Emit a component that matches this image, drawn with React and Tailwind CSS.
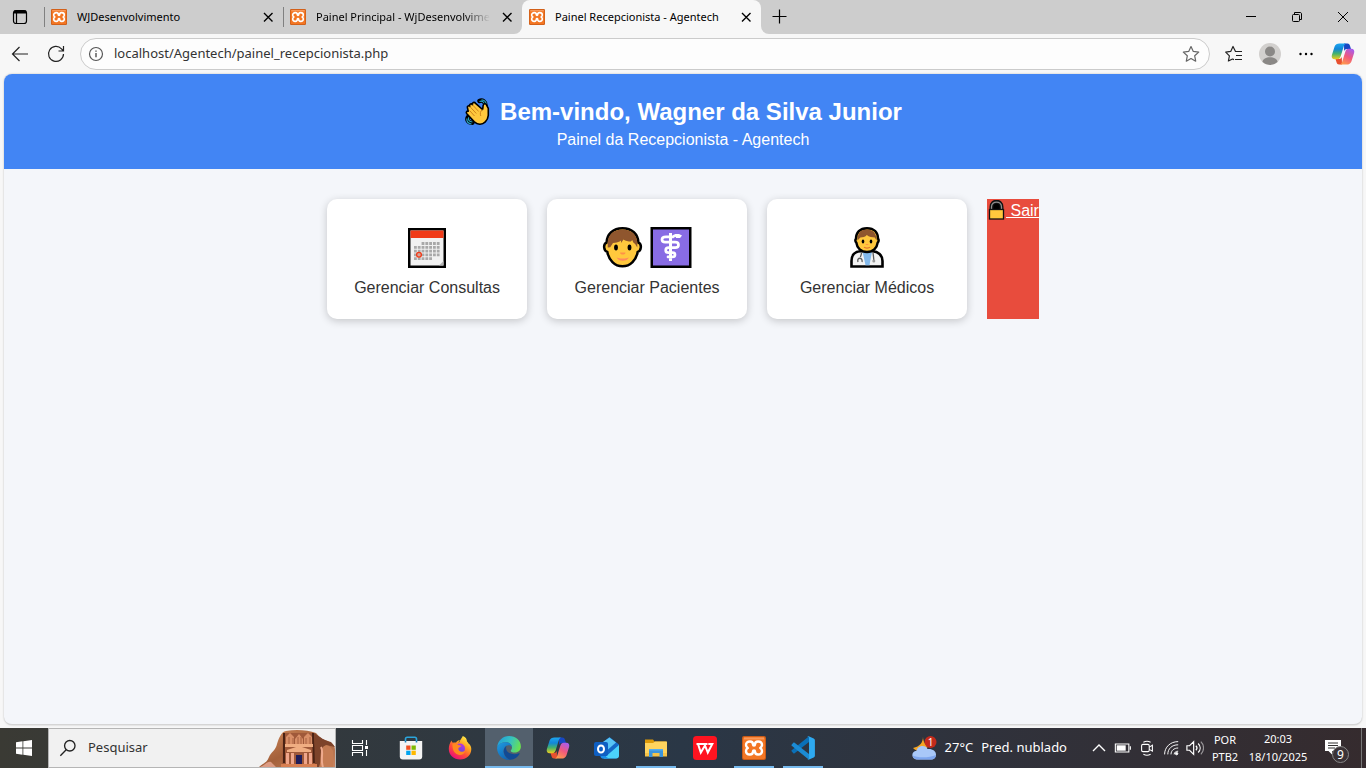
import React, { useState } from "react";

const tabs = [
    { id: 1, title: "WJDesenvolvimento" },
    { id: 2, title: "Painel Principal - WjDesenvolvime", faded: true },
    { id: 3, title: "Painel Recepcionista - Agentech" }
];

const cards = [
    { label: "Gerenciar Consultas", icons: [CalendarEmoji] },
    { label: "Gerenciar Pacientes", icons: [PersonEmoji, MedicalEmoji] },
    { label: "Gerenciar Médicos", icons: [DoctorEmoji] }
];

const apps = [
    { name: "Microsoft Store", icon: StoreIcon },
    { name: "Firefox", icon: FirefoxIcon },
    { name: "Edge", icon: EdgeIcon, active: true },
    { name: "Copilot", icon: CopilotIcon },
    { name: "Outlook", icon: OutlookIcon },
    { name: "Explorador de Arquivos", icon: FolderIcon, running: true },
    { name: "WPS Office", icon: WpsIcon },
    { name: "XAMPP", icon: XamppIcon, running: true },
    { name: "Visual Studio Code", icon: VsCodeIcon, running: true }
];

/* ---------- app logos ---------- */

function XamppIcon({ className = "size-6" }) {
    return (
        <svg viewBox="0 0 24 24" className={className}>
            <rect width="24" height="24" rx="2" fill="#c85a17" />
            <rect x="1" y="1" width="22" height="22" rx="1.5" fill="#f37623" />
            <path d="M2 1.500h20v2H2z" fill="#f9a873" opacity=".7" />
            <path
                d="M8 5.500c2 0 3 1.200 3 3 0 .7.300 1 1 1s1-.3 1-1c0-1.800 1-3 3-3 2.400 0 4 1.400 4 3.500 0 1.300-.6 2.300-1.800 3 1.200.7 1.800 1.700 1.800 3 0 2.100-1.600 3.500-4 3.500-2 0-3-1.200-3-3 0-.7-.3-1-1-1s-1 .3-1 1c0 1.800-1 3-3 3-2.400 0-4-1.400-4-3.500 0-1.300.6-2.300 1.800-3C4.600 11.300 4 10.300 4 9c0-2.100 1.600-3.500 4-3.500z"
                fill="none"
                stroke="#fff"
                strokeWidth="2.400"
                strokeLinejoin="round"
            />
        </svg>
    );
}

function CopilotIcon({ className = "size-6" }) {
    return (
        <svg viewBox="0 0 24 24" className={className}>
            <defs>
                <linearGradient id="cpA" x1="0" y1="0" x2="0" y2="1">
                    <stop offset="0" stopColor="#1ea7f0" />
                    <stop offset=".35" stopColor="#1286d8" />
                    <stop offset=".65" stopColor="#45b36b" />
                    <stop offset="1" stopColor="#f0cc1c" />
                </linearGradient>
                <linearGradient id="cpB" x1=".8" y1="0" x2=".3" y2="1">
                    <stop offset="0" stopColor="#a65df0" />
                    <stop offset=".5" stopColor="#f0587e" />
                    <stop offset="1" stopColor="#ff9a4c" />
                </linearGradient>
            </defs>
            <path d="M13 1.500h3.500c1.300 0 2 .8 2.400 2L20 7h-4c-1.500 0-2.400.8-2.900 2.200z" fill="#1747c4" />
            <path d="M11 22.500H8c-1.400 0-2-.8-2.400-2L4.500 17H8c1.600 0 2.300-.8 2.800-2.200z" fill="#e8502f" />
            <path d="M8.500 1.500h7c-1.500.2-2.200 1.300-2.700 2.800L9.600 14.600C9 16.300 8 17.200 6.400 17.200H3.600C1.300 17.200.2 15.400.9 13L3.600 4.600C4.300 2.600 6 1.500 8.500 1.500z" fill="url(#cpA)" />
            <path d="M15.500 22.500h-7c1.500-.2 2.200-1.300 2.700-2.800l3.200-10.300C15 7.700 16 6.800 17.600 6.800h2.800c2.300 0 3.400 1.800 2.700 4.200l-2.700 8.400c-.7 2-2.400 3.100-4.900 3.100z" fill="url(#cpB)" />
        </svg>
    );
}

function StoreIcon() {
    return (
        <svg viewBox="0 0 24 24" className="size-6">
            <path d="M6.500 7V3c0-1 .6-1.700 1.700-1.700h7.600c1.100 0 1.700.7 1.700 1.700v4" fill="none" stroke="#2ba5dc" strokeWidth="1.600" />
            <path d="M.8 5h22.400v15.500c0 2-1 3-3 3H3.800c-2 0-3-1-3-3z" fill="#f4f4f4" />
            <path d="M6.500 5V6.500M17.500 5V6.500" stroke="#1a7fb8" strokeWidth="1.600" />
            <path d="M7.200 9.500h4.300v4.300H7.200z" fill="#f25022" />
            <path d="M12.500 9.500h4.300v4.300h-4.300z" fill="#7fba00" />
            <path d="M7.200 14.700h4.300V19H7.200z" fill="#00a4ef" />
            <path d="M12.500 14.700h4.300V19h-4.300z" fill="#ffb900" />
        </svg>
    );
}

function FirefoxIcon() {
    return (
        <svg viewBox="0 0 24 24" className="size-6">
            <defs>
                <linearGradient id="ffBody" x1=".85" y1=".05" x2=".25" y2=".95">
                    <stop offset="0" stopColor="#fff44f" />
                    <stop offset=".35" stopColor="#ffa61f" />
                    <stop offset=".65" stopColor="#ff4f38" />
                    <stop offset="1" stopColor="#ec1075" />
                </linearGradient>
                <linearGradient id="ffCore" x1=".7" y1="0" x2=".3" y2="1">
                    <stop offset="0" stopColor="#b833e1" />
                    <stop offset="1" stopColor="#5b4fd8" />
                </linearGradient>
            </defs>
            <path d="M3.500 4.500c.3 1 .6 1.600 1.400 2.300 1-.4 2-.4 3.100-.2C9 5 10.500 4.200 12 4c-1 1-1.400 1.800-1.200 3 2-4 3-5 4-7 3 1 4.200 3.400 4.200 5.600.6.4 1 1 1.300 1.700C22.500 9 23.300 11 23.300 13c0 6-4.800 10.500-11.200 10.500S.8 19 .8 13c0-3.200 1-6 2.700-8.500z" fill="url(#ffBody)" />
            <circle cx="12" cy="12.500" r="5" fill="url(#ffCore)" />
            <path d="M4.500 8c2-1 4-.8 6 1l3 .7c-.3 1.200-2.500 1.200-3 2.300-.4 1.400.2 2.800 1.800 3.500 2 .7 3.600.2 5-.8-.8 3-3.300 4.500-6 4.200C7.500 18.500 4 15 4.500 8z" fill="#ff8a1f" />
        </svg>
    );
}

function EdgeIcon() {
    return (
        <svg viewBox="0 0 24 24" className="size-6">
            <defs>
                <linearGradient id="edTop" x1="0" y1=".3" x2="1" y2=".6">
                    <stop offset="0" stopColor="#219fd8" />
                    <stop offset=".5" stopColor="#35c1c1" />
                    <stop offset="1" stopColor="#6be24d" />
                </linearGradient>
                <linearGradient id="edLeft" x1="0" y1="0" x2=".7" y2="1">
                    <stop offset="0" stopColor="#1f9de2" />
                    <stop offset="1" stopColor="#1060b0" />
                </linearGradient>
            </defs>
            <path d="M.2 11C.8 4.800 5.800.1 12 .1c6.900 0 11.900 4.700 11.900 10.400 0 3.700-2.700 6-6 6-2.700 0-4.200-.9-4.200-1.800 0-.7 1.300-1.200 1.300-3.300C15 8.500 12.300 6.300 8.700 6.300 5 6.300 1.900 8 .2 11z" fill="url(#edTop)" />
            <path d="M.1 12C.6 8.600 4 6.200 8.700 6.200c3.600 0 6.300 2.200 6.300 5-1-1.600-2.200-2-3.600-1.900-3 .2-5 3-4.800 6.400.2 3.600 2.800 7 6.900 8.100C6 24.600 0 19 .1 12z" fill="url(#edLeft)" />
            <path d="M9.600 10c-2.400 1.500-3.300 4-2.700 6.800.8 3.800 3.600 6.300 6.600 7 4-.4 7.200-2.700 9-5.900.4-.6 0-.9-.6-.6-1.500.7-2.900 1-4.400 1-4.500 0-8-2.500-8.400-5.600-.1-1 0-1.900.5-2.700z" fill="#124a94" />
        </svg>
    );
}

function OutlookIcon() {
    return (
        <svg viewBox="0 0 26 24" className="h-6 w-[26px]">
            <path d="M6 8.500 15.500 1 25 8.500V19c0 2.300-1 3.500-3.500 3.500h-12C7 22.500 6 21 6 19z" fill="#1469c7" />
            <path d="m9 6 6.500-4.500L22 6.500 14 13.500l-6-5z" fill="#58c4f5" />
            <path d="M25 9v10.500c0 2-1.200 3-3 3H9.500z" fill="#4bd2fb" />
            <path d="M7 10v8l8 4.500H9c-1.500 0-2-1-2-2z" fill="#1b8fe8" />
            <rect y="6" width="14" height="14" rx="2" fill="#0f5fc2" />
            <ellipse cx="7" cy="13" rx="3" ry="3.500" fill="none" stroke="#fff" strokeWidth="2" />
        </svg>
    );
}

function FolderIcon() {
    return (
        <svg viewBox="0 0 24 24" className="size-6">
            <path d="M1 3.500h8l1.500 2H22v4H1z" fill="#dd9a09" />
            <path d="M1 7h8l2-1.500h12V20H1z" fill="#ffd45e" />
            <path d="M1 17h22v3.500H1z" fill="#f7c448" />
            <path d="M5 13h14v8h-3.500v-4h-7v4H5z" fill="#3b95dd" />
            <path d="M5 13h14v1.500H5z" fill="#57adec" />
        </svg>
    );
}

function WpsIcon() {
    return (
        <svg viewBox="0 0 24 24" className="size-6">
            <rect width="24" height="24" rx="3.500" fill="#ff1420" />
            <path d="M3.500 8h11M5 8l2.800 8.500L12 9.500l2.800 7L19.300 8h-4" fill="none" stroke="#fff" strokeWidth="2" />
        </svg>
    );
}

function VsCodeIcon() {
    return (
        <svg viewBox="0 0 24 24" className="size-6">
            <path d="m.6 15.300 1.700 1.900c.4.300.9.300 1.300 0L18 6V.2L.7 14.200c-.4.300-.4.800-.1 1.100z" fill="#0a70b8" />
            <path d="M.6 8.700l1.700-1.900c.4-.3.900-.3 1.300 0L18 18v5.800L.7 9.800c-.4-.3-.4-.8-.1-1.100z" fill="#1b8bd4" />
            <path d="M17.500 23.800c-.6 0-1-.1-1.500-.5.700.6 2 .2 2-.9V1.600c0-1.100-1.300-1.500-2-.9.500-.5 1-.7 1.700-.5l5 2.300c.8.400 1.200 1 1.200 1.700v15.600c0 .7-.4 1.300-1.200 1.700z" fill="#2ea9f0" />
        </svg>
    );
}

/* ---------- emoji ---------- */

function WaveEmoji() {
    return (
        <svg viewBox="0 0 28 28" className="size-7">
            <path d="M15.500 3c3-1.500 6 1 6 4.500M4.500 18.500c-2.500 3-.5 6 4 6.200" fill="none" stroke="#000" strokeWidth="4.500" strokeLinecap="round" />
            <path d="M15.500 3.500c3-1.300 5 1 5.200 4M17.500 1.800c2.500.2 4.500 2 4.800 4.700M5 19c-1.500 2.500 0 4.700 3.500 5M2.800 20.500c-.2 2.800 1.500 5 4.700 5.500" fill="none" stroke="#26a5c4" strokeWidth="1.100" />
            <path
                d="M3.500 10c-.8-1.600 1-2.900 2.300-1.700-.9-2 1.200-3.300 2.600-1.700-.5-2 1.800-3 3.200-1.300l6.900 6.200c.6-1.500.3-3 .8-4.500.6-2 3-1.300 3.400.4l1.600 3v7c-.3 3-1.500 5.100-3 6.500-3.500 3.400-8 2.500-11 0l-7.500-8.200c-1.300-1.600.2-3 1.400-2.500L3.500 10z"
                fill="#ffc83d"
                stroke="#000"
                strokeWidth="1.600"
                strokeLinejoin="round"
            />
            <path d="m5.800 8.500 6.500 7M8.400 6.700l6.300 6.800M5.500 12.500l5 5.500M18.300 11.500c-2 2-2.500 4-1.500 6.500" fill="none" stroke="#c97c16" strokeWidth=".9" />
        </svg>
    );
}

function CalendarEmoji() {
    return (
        <svg viewBox="0 0 42 44" className="h-11 w-[42px]">
            <path d="M2 3h38v40H2z" fill="#000" />
            <path d="M4.500 5.500h33v35h-33z" fill="#f1f1f1" />
            <path d="M4.500 5.500h33V13h-33z" fill="#f03a17" />
            <g fill="none" stroke="#a9a9a9" strokeWidth="2.800" strokeDasharray="2.800 1">
                <path d="M15.600 18.500h18.100" />
                <path d="M8 22.300h25.700" />
                <path d="M8 26.100h25.700" />
                <path d="M8 29.900h25.700" />
                <path d="M8 33.700h18.100" />
            </g>
            <circle cx="13" cy="29.800" r="2.400" fill="#d6a398" stroke="#f03a17" strokeWidth="1.300" />
            <path d="M37.500 36v4.500H33z" fill="#b5b5b5" />
        </svg>
    );
}

function PersonEmoji() {
    return (
        <svg viewBox="0 0 42 44" className="h-11 w-[42px]">
            <path
                d="M20.500 3.200c9.500 0 15.500 6 16 14.500 2.100 1 2.600 2.700 2.300 5-.3 2.300-1.200 3.600-3.100 4.200-1.500 8-7.200 14.400-15.200 14.400S6.800 34.900 5.300 26.900c-1.900-.6-2.800-1.900-3.100-4.200-.3-2.300.2-4 2.300-5C5 9.200 11 3.200 20.500 3.200z"
                fill="#ffc83d"
                stroke="#000"
                strokeWidth="2.500"
            />
            <path d="M5.700 22.500V18C5.700 9.500 12 4.500 20.500 4.500S35.300 9.500 35.300 18v4.500l-2.300-3.700c-1.200-.6-2.200-1.900-2.700-3.800l-1.500 1.500c-2.500 0-5.300-.5-7.300-2L19 18v-2.500c-2 1.500-3.500 2-6 2.300L11 18l-2.800 4.200z" fill="#8f562e" />
            <ellipse cx="14" cy="22.500" rx="1.900" ry="3" />
            <ellipse cx="27.500" cy="22.500" rx="1.900" ry="3" />
            <path d="M18 27.500h5.500c0 1.500-1.300 2-2.700 2s-2.800-.5-2.800-2z" fill="#ff9048" />
            <path d="M16 33.500c1.500 2.300 8 2.300 9.500 0-2.500.7-7 .7-9.500 0z" fill="#ff8a5c" stroke="#ff8a5c" strokeWidth="1.200" />
        </svg>
    );
}

function MedicalEmoji() {
    return (
        <svg viewBox="0 0 42 44" className="h-11 w-[42px]">
            <path d="M.5 2h41v41H.5z" fill="#000" />
            <path d="M3 4.500h36v36H3z" fill="#886ce4" />
            <path d="M20.500 8v28" stroke="#fff" strokeWidth="3" strokeDasharray="24 1.200 3" />
            <path d="M29 11.500c-1.500-1.500-4-1.500-6 .3h-7c-2.500 0-4 1-4 2.700s1.200 2.700 3.200 2.700h10c2.200 0 3.300 1 3.300 2.800s-1.300 2.700-3.300 2.700h-6.500c-2 0-3 1-3 2.500s1 2.500 2.800 2.500h4c1.700 0 2.500.8 2.500 2s-1 2.200-2.700 2.200H18" fill="none" stroke="#fff" strokeWidth="2.700" strokeLinecap="round" />
            <path d="M25 9h4l3 1.500-2 2.500h-4z" fill="#fff" />
        </svg>
    );
}

function DoctorEmoji() {
    return (
        <svg viewBox="0 0 42 44" className="h-11 w-[42px]">
            <path d="M5.500 41.500V36c0-6 3.500-9.500 9-9.700h12c5.500.2 10 3.700 10 9.700v5.500z" fill="#f3f3f3" stroke="#000" strokeWidth="2.600" />
            <path d="M16.500 26.500H26l-2.500 13.700h-4z" fill="#83b9eb" />
            <path
                d="M21 3.200c7.200 0 11 4.500 11 10.500 1 1 .8 3-.3 4C31 23 27 27 21 27S11 23 10.300 17.700c-1.100-1-1.300-3-.3-4C10 7.700 13.800 3.200 21 3.200z"
                fill="#ffc83d"
                stroke="#000"
                strokeWidth="2.500"
            />
            <path d="M11.500 15.500C11.500 7.500 15 4.500 21 4.500s9.500 3.500 9.500 11l-1.700-3c-2.300 0-6-.4-8-2.400-1.500 1.800-4 2.400-6.500 2.400z" fill="#8f562e" />
            <ellipse cx="17" cy="16.500" rx="1.300" ry="2" />
            <ellipse cx="25" cy="16.500" rx="1.300" ry="2" />
            <path d="M19.500 19h3c0 1.300-3 1.300-3 0z" fill="#ff9048" />
            <path d="M18 22.200c1 1.200 5 1.200 6 0" fill="none" stroke="#e0762c" strokeWidth="1.100" />
            <path d="M15.500 27.500c0 3-1 3-1 4.500M12 37c-1.500-5 5-5 4 0M27 27.500c.3 3 .8 5 .8 8" fill="none" stroke="#5a5a5a" strokeWidth="1.300" />
            <circle cx="27.800" cy="36" r="1.500" fill="#9a9a9a" />
        </svg>
    );
}

function LockEmoji() {
    return (
        <svg viewBox="0 0 19 20" className="inline h-5 w-[19px] align-[-4px]">
            <path d="M4.500 10V7c0-7 10-7 10 0v3" fill="#000" stroke="#111" strokeWidth="4" />
            <path d="M4.500 10V7c0-6.500 10-6.500 10 0v3" fill="none" stroke="#8f8f8f" strokeWidth="1.300" />
            <rect x="2.500" y="9.500" width="14" height="9.500" fill="#ffc83d" stroke="#111" strokeWidth="1.300" />
        </svg>
    );
}

/* ---------- small line icons ---------- */

function Line({ children, className = "size-5", width = 1 }) {
    return (
        <svg viewBox="0 0 20 20" className={className} fill="none" stroke="currentColor" strokeWidth={width}>
            {children}
        </svg>
    );
}

function TabStrip() {
    const [current, setCurrent] = useState(3);

    return (
        <div className="flex h-[34px] shrink-0 bg-[#f7f7f7] text-black">
            <button aria-label="Menu de guias" className="flex w-11 items-center bg-[#cdcdcd] pl-[10px]">
                <Line width={1.2}>
                    <rect x="3.500" y="3.500" width="13" height="13" rx="2.500" />
                    <path d="M4 5.500h12M4 4.500h12" strokeWidth="2" />
                    <path d="M6.500 6v10" />
                </Line>
            </button>
            {tabs.map((tab) => {
                const active = tab.id === current;
                const beforeActive = tab.id === current - 1;
                return (
                    <div key={tab.id} className={`w-[239px] bg-[#cdcdcd] ${beforeActive ? "rounded-br-lg" : ""}`}>
                        <div className={`flex h-full items-center ${active ? "rounded-t-lg bg-[#f7f7f7]" : ""}`}>
                            <span className={`h-5 w-px ${active ? "" : "bg-[#808080]"}`} />
                            <button
                                onClick={() => setCurrent(tab.id)}
                                className="flex min-w-0 flex-1 items-center gap-[10px] pl-[6px] text-left"
                            >
                                <XamppIcon className="size-4 shrink-0" />
                                <span
                                    className={`text-[11px] leading-5 whitespace-nowrap ${
                                        tab.faded ? "[mask-image:linear-gradient(to_right,black_85%,transparent)]" : ""
                                    }`}
                                >
                                    {tab.title}
                                </span>
                            </button>
                            <button aria-label="Fechar guia" className="mr-[5px] flex size-5 shrink-0 items-center justify-center">
                                <Line width={1.4}>
                                    <path d="m6 6 8.500 8.500M14.500 6 6 14.500" />
                                </Line>
                            </button>
                        </div>
                    </div>
                );
            })}
            <div className="flex flex-1 items-center rounded-bl-lg bg-[#cdcdcd]">
                <button aria-label="Nova guia" className="ml-2 flex h-full items-center pb-[2px]">
                    <Line width={1.2}>
                        <path d="M10.500 3.500v14M3.500 10.500h14" />
                    </Line>
                </button>
                <div className="ml-auto flex h-full">
                    <button aria-label="Minimizar" className="flex w-[46px] items-center justify-center">
                        <Line><path d="M5 9.500h10" /></Line>
                    </button>
                    <button aria-label="Restaurar" className="flex w-[46px] items-center justify-center">
                        <Line>
                            <rect x="5.500" y="7.500" width="7" height="7" rx="1" />
                            <path d="M7.500 7V5.500h5.500c1 0 1.500.5 1.500 1.500v5.500H13" />
                        </Line>
                    </button>
                    <button aria-label="Fechar" className="flex w-[46px] items-center justify-center">
                        <Line><path d="m5 5 10 10M15 5 5 15" /></Line>
                    </button>
                </div>
            </div>
        </div>
    );
}

function Toolbar() {
    return (
        <div className="flex h-10 shrink-0 items-center bg-[#f7f7f7] pr-1 pl-[2px] text-[#222]">
            <button aria-label="Voltar" className="flex w-9 justify-center">
                <Line width={1.2}><path d="M18 10H2.500M9.500 3l-7 7 7 7" /></Line>
            </button>
            <button aria-label="Atualizar" className="flex w-9 justify-center">
                <Line width={1.2}><path d="M17.500 10A7.500 7.500 0 1 1 15.500 4.800L17 6.500M17.500 2v5h-5" /></Line>
            </button>
            <div className="mx-[6px] flex h-8 flex-1 items-center rounded-full border border-[#cbcbcb] bg-[#fdfdfd] pr-2 pl-[6px]">
                <Line className="size-[18px] text-[#555]" width={1.3}>
                    <circle cx="10" cy="10" r="7.200" />
                    <path d="M10 9v4.500M10 6v1.600" strokeWidth="1.600" />
                </Line>
                <input
                    aria-label="Endereço"
                    defaultValue="localhost/Agentech/painel_recepcionista.php"
                    className="ml-[9px] min-w-0 flex-1 bg-transparent text-[13px] text-[#333] outline-none"
                />
                <button aria-label="Favoritar" className="text-[#666]">
                    <Line width={1.2}>
                        <path d="m10 2.500 2.300 4.900 5.400.7-4 3.700 1 5.400-4.700-2.700-4.700 2.700 1-5.400-4-3.700 5.400-.7z" strokeLinejoin="round" />
                    </Line>
                </button>
            </div>
            <button aria-label="Favoritos" className="flex w-9 justify-center">
                <Line width={1.2}>
                    <path d="M11.500 7.500 9 2.500 6.700 7.400l-5 .7 3.700 3.700-1 5.200L8.500 15l1.500.6" strokeLinejoin="round" />
                    <path d="M11 7.500h7M12 11.500h6M11 15.500h7" />
                </Line>
            </button>
            <button aria-label="Perfil" className="flex w-9 justify-center">
                <svg viewBox="0 0 22 22" className="size-[22px]">
                    <circle cx="11" cy="11" r="11" fill="#d2d0ce" />
                    <circle cx="11" cy="8.500" r="5" fill="#8a8886" />
                    <path d="M3.500 19c0-6.500 15-6.500 15 0a11 11 0 0 1-15 0z" fill="#8a8886" />
                </svg>
            </button>
            <button aria-label="Mais opções" className="flex w-9 justify-center">
                <svg viewBox="0 0 20 20" className="size-5">
                    <circle cx="4.500" cy="10" r="1.200" />
                    <circle cx="10" cy="10" r="1.200" />
                    <circle cx="15.500" cy="10" r="1.200" />
                </svg>
            </button>
            <button aria-label="Copilot" className="flex w-[38px] justify-center">
                <CopilotIcon />
            </button>
        </div>
    );
}

function Painel() {
    return (
        <main className="flex-1 overflow-hidden rounded-lg border-b border-[#d5d5d5] bg-[#f4f6fa] font-['Liberation_Sans',Arial,sans-serif] shadow-[0_0_2px_rgba(0,0,0,0.25)]">
            <header className="bg-[#4285f4] pt-6 pb-[15px] text-center text-white">
                <h1 className="flex items-center justify-center gap-2 text-2xl leading-7 font-bold">
                    <WaveEmoji />
                    Bem-vindo, Wagner da Silva Junior
                </h1>
                <p className="text-base leading-7">Painel da Recepcionista - Agentech</p>
            </header>
            <div className="flex flex-wrap justify-center gap-5 p-[30px]">
                {cards.map((card) => (
                    <a
                        key={card.label}
                        href="#"
                        className="flex h-[120px] w-[200px] flex-col items-center rounded-[10px] bg-white pt-[26px] text-[#333] shadow-[0_2px_8px_rgba(0,0,0,0.2)]"
                    >
                        <span className="flex gap-[6px]">
                            {card.icons.map((Icon, i) => (
                                <Icon key={i} />
                            ))}
                        </span>
                        <span className="mt-[10px] text-base leading-[18px]">{card.label}</span>
                    </a>
                ))}
                <a href="#" className="bg-[#e84c3d] text-base whitespace-nowrap text-white underline">
                    <LockEmoji /> Sair
                </a>
            </div>
        </main>
    );
}

function PetraPicture() {
    return (
        <svg viewBox="0 0 76 38" className="h-[38px] w-[76px]">
            <defs>
                <linearGradient id="rock" x1="0" y1="0" x2="1" y2="1">
                    <stop offset="0" stopColor="#d08a5c" />
                    <stop offset=".5" stopColor="#a4603a" />
                    <stop offset="1" stopColor="#c9845f" />
                </linearGradient>
            </defs>
            <path d="M0 38c4-4 8-4 10-10 2-5 7-7 8-13 2-6 4-12 9-13 10-2 22-1 30 2 5 6 8 7 12 8 5 3 7 4 7 9v17z" fill="url(#rock)" />
            <path d="M24 4h31l4 34H23z" fill="#a0593a" />
            <path d="M24 4h2v30h-2zM53 4h2l2 30h-3z" fill="#4a2214" />
            <path d="M55 4c6 4 11 8 17 9l4 5-9-2-6 22h-5z" fill="#7d432a" />
            <path d="M27 8l4-4 4 4v7h-8zM45 8l4-4 4 4v7h-8zM36 10l4-5 4 5v6h-8z" fill="#d98f68" />
            <path d="M26 15h28v3H26zM28 21l12-4 12 4v2H28z" fill="#f0ad82" />
            <path d="M27 24h3v11h-3zM32 24h3v11h-3zM45 24h3v11h-3zM50 24h3v11h-3z" fill="#efa58a" />
            <path d="M30 8v7M34 9v6M47 9v6M51 8v7M39 8v7M42 8v7" stroke="#a86040" />
            <path d="M37 26h6v9h-6z" fill="#201d5a" />
            <path d="M22 35h36v3H22z" fill="#d87f51" />
            <path d="M60 38c3-8 0-14 4-20 4-4 8 0 10 4v16z" fill="#c57c53" />
            <path d="M62 18c3 5-1 12 2 20" fill="none" stroke="#efab8e" strokeWidth="2" />
            <path d="M1 38c5-2 7-6 11-5l5 5z" fill="#dc9b83" />
        </svg>
    );
}

function Taskbar() {
    return (
        <footer className="flex h-10 shrink-0 bg-linear-to-r from-[#3a3a34] via-[#2a3746] to-[#352b2e] text-white">
            <button aria-label="Iniciar" className="flex w-12 items-center justify-center">
                <svg viewBox="0 0 16 16" className="size-4" fill="#fff">
                    <path d="M0 2.200 6.500 1.300v6.300H0zM7.300 1.200 16 0v7.600H7.300zM0 8.400h6.500v6.300L0 13.800zM7.300 8.400H16V16l-8.700-1.200z" />
                </svg>
            </button>
            <label className="flex w-72 items-center border border-[#b5b5b5] bg-[#f1f1f1] pl-[10px] text-[#222]">
                <Line className="size-[18px] shrink-0" width={1.5}>
                    <circle cx="12" cy="7.500" r="5.800" />
                    <path d="m8 12-6.500 6.500" />
                </Line>
                <input
                    aria-label="Pesquisar"
                    placeholder="Pesquisar"
                    className="ml-[11px] min-w-0 flex-1 bg-transparent text-[13px] outline-none placeholder:text-[#333]"
                />
                <PetraPicture />
            </label>
            <button aria-label="Visão de tarefas" className="flex w-12 items-center justify-center">
                <Line className="size-5" width={1.1}>
                    <path d="M2.500 2v3.500h10V2M2.500 18v-3.500h10V18M2.500 7.500h10v5h-10zM16.500 2v5M16.500 12v6" />
                    <path d="M15 8h3v3h-3z" fill="currentColor" stroke="none" />
                </Line>
            </button>
            <nav className="ml-[3px] flex gap-px">
                {apps.map(({ name, icon: Icon, active, running }) => (
                    <button
                        key={name}
                        aria-label={name}
                        className={`flex w-12 flex-col items-center pt-2 ${active ? "bg-[#53606d]" : ""}`}
                    >
                        <Icon />
                        {(active || running) && (
                            <span className={`mt-auto h-[2px] bg-[#76b9ed] ${active ? "w-12" : "w-10"}`} />
                        )}
                    </button>
                ))}
            </nav>
            <div className="ml-auto flex items-center">
                <button className="mr-5 flex items-center gap-2 text-[13px]">
                    <svg viewBox="0 0 25 24" className="h-6 w-[25px]">
                        <path d="M11 .5c0 6-3 10-10 11.500C4 16 14 17 16 10 13 9 11 5 11 .5z" fill="#f5a623" />
                        <path d="M6 23.500c-7 0-7.500-8-1.500-8.700C5.500 9 14 8.500 15.500 13c5-.5 8.500 2 8.500 5.500s-2 5-5 5z" fill="#a9c8f8" />
                        <path d="M6 23.500c-3 0-5-1.800-5.300-4 4 2.500 17 2.500 23.200-.5-.2 3-2.200 4.500-4.900 4.500z" fill="#7ea6ee" />
                        <circle cx="18.500" cy="6" r="6" fill="#c42b1c" />
                        <text x="18.500" y="9.500" textAnchor="middle" fontSize="10" fill="#fff">1</text>
                    </svg>
                    <span>27°C</span>
                    <span>Pred. nublado</span>
                </button>
                <button aria-label="Mostrar ícones ocultos" className="flex w-6 justify-center">
                    <Line width={1.4}><path d="m4 13 6-6 6 6" /></Line>
                </button>
                <button aria-label="Bateria" className="flex w-6 justify-center">
                    <Line width={1.2} className="size-[18px]">
                        <path d="M1.500 5.500h15v9h-15zM18.200 8v4" />
                        <path d="M3 7h10v6H3z" fill="currentColor" stroke="none" />
                    </Line>
                </button>
                <button aria-label="Reunir agora" className="flex w-6 justify-center">
                    <Line width={1.2} className="size-[18px]">
                        <rect x="4" y="6" width="8.500" height="8" rx="1.500" />
                        <path d="m12.500 9 3.500-2v6.500l-3.500-2M6 3.500c3-1.500 5-1.500 8 0M6 17c3 1.500 5 1.500 8 0" />
                    </Line>
                </button>
                <button aria-label="Rede" className="flex w-6 justify-center">
                    <Line width={1.2} className="size-4">
                        <path d="M2 18C2 9 9 2 19 2M6 18C6 11 11 6 19 6M10 18c0-5 4-8 9-8M14 18c0-2.500 2-4 5-4" />
                        <circle cx="17" cy="17" r="1.500" fill="currentColor" />
                    </Line>
                </button>
                <button aria-label="Volume" className="flex w-6 justify-center">
                    <Line width={1.3} className="size-[18px]">
                        <path d="M1 7.500h3L8.500 3v14L4 12.500H1zM11 7.500c1.500 1.500 1.500 3.500 0 5M13.500 5c3 3 3 7 0 10" />
                        <path d="M16.500 3c4 4 4 10 0 14" opacity=".5" />
                    </Line>
                </button>
                <button className="w-9 text-center text-[11px] leading-[17px]">
                    POR<br />PTB2
                </button>
                <time className="w-[70px] text-center text-[11px] leading-[18px]">
                    20:03<br />18/10/2025
                </time>
                <button aria-label="Notificações" className="mr-3 ml-3 size-6">
                    <svg viewBox="0 0 24 24" className="size-6 overflow-visible">
                        <path d="M0 4h16v11H7v3.500L3.500 15H0z" fill="#fff" />
                        <path d="M3 7h10M3 9.500h10M3 12h7" stroke="#333" />
                        <circle cx="15.500" cy="18.500" r="8" fill="#3a3236" stroke="#888" />
                        <text x="15.500" y="23" textAnchor="middle" fontSize="12" fill="#fff">9</text>
                    </svg>
                </button>
                <span className="mr-1 h-10 w-px bg-[#777]" />
            </div>
        </footer>
    );
}

export default function App() {
    return (
        <div className="flex h-screen flex-col bg-[#f7f7f7] font-['Noto_Sans',sans-serif]">
            <TabStrip />
            <Toolbar />
            <div className="flex flex-1 px-1 pb-[3px]">
                <Painel />
            </div>
            <Taskbar />
        </div>
    );
}
